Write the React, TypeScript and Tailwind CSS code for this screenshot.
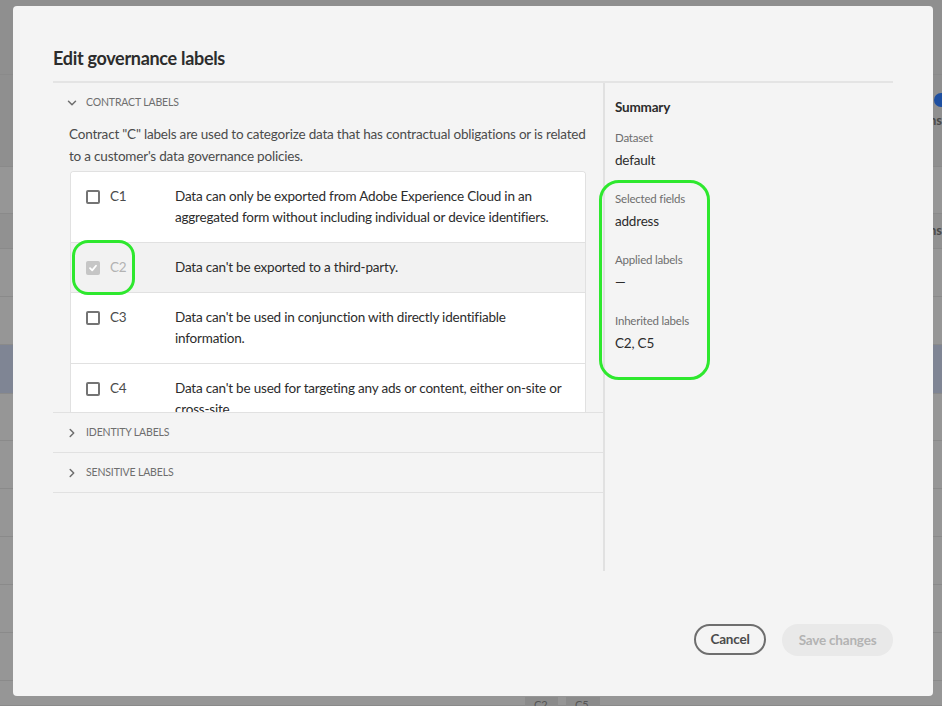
import React from "react";

const rows = [
  { h: 75, bg: "bg-[#8f8f8f]", text: "" },
  { h: 92, bg: "bg-[#8f8f8f]", text: "ns" },
  { h: 47, bg: "bg-[#969696]", text: "" },
  { h: 35, bg: "bg-[#919191]", text: "ns" },
  { h: 48, bg: "bg-[#969696]", text: "" },
  { h: 48, bg: "bg-[#969696]", text: "" },
  { h: 49, bg: "bg-[#7f8594]", text: "" },
  { h: 47, bg: "bg-[#969696]", text: "" },
  { h: 48, bg: "bg-[#969696]", text: "" },
  { h: 48, bg: "bg-[#969696]", text: "" },
  { h: 48, bg: "bg-[#969696]", text: "" },
  { h: 48, bg: "bg-[#969696]", text: "" },
  { h: 48, bg: "bg-[#969696]", text: "" },
  { h: 25, bg: "bg-[#969696]", text: "" },
];

const labels = [
  {
    code: "C1",
    text: "Data can only be exported from Adobe Experience Cloud in an aggregated form without including individual or device identifiers.",
    checked: false,
  },
  { code: "C2", text: "Data can't be exported to a third-party.", checked: true },
  {
    code: "C3",
    text: "Data can't be used in conjunction with directly identifiable information.",
    checked: false,
  },
  {
    code: "C4",
    text: "Data can't be used for targeting any ads or content, either on-site or cross-site.",
    checked: false,
  },
];

function ChevronDown() {
  return (
    <svg width="10" height="10" viewBox="0 0 10 10" className="text-[#6e6e6e]">
      <path d="M1.5 3.2 L5 6.7 L8.5 3.2" fill="none" stroke="currentColor" strokeWidth="1.5" strokeLinecap="round" strokeLinejoin="round" />
    </svg>
  );
}

function ChevronRight() {
  return (
    <svg width="10" height="10" viewBox="0 0 10 10" className="text-[#6e6e6e]">
      <path d="M3.2 1.5 L6.7 5 L3.2 8.5" fill="none" stroke="currentColor" strokeWidth="1.5" strokeLinecap="round" strokeLinejoin="round" />
    </svg>
  );
}

function Checkbox({ checked }: { checked: boolean }) {
  if (checked) {
    return (
      <div className="w-[14px] h-[14px] rounded-[2px] bg-[#c6c6c6] flex items-center justify-center">
        <svg width="10" height="10" viewBox="0 0 10 10">
          <path d="M2 5.2 L4.2 7.4 L8 2.8" fill="none" stroke="#ffffff" strokeWidth="1.8" strokeLinecap="round" strokeLinejoin="round" />
        </svg>
      </div>
    );
  }
  return <div className="w-[14px] h-[14px] rounded-[2px] border-2 border-[#747474] bg-white" />;
}

function Section({ title }: { title: string }) {
  return (
    <div className="h-[40px] border-b border-[#e1e1e1] flex items-center pl-[14px]">
      <ChevronRight />
      <span className="ml-[9px] text-[10.5px] uppercase text-[#6e6e6e] tracking-[-0.15px]">{title}</span>
    </div>
  );
}

function Field({ label, value, first }: { label: string; value: string; first?: boolean }) {
  return (
    <div className={first ? "mt-[13px]" : "mt-[21px]"}>
      <div className="text-[11.5px] leading-[16px] tracking-[-0.2px] text-[#6e6e6e]">{label}</div>
      <div className="mt-[4px] text-[13.5px] leading-[20px] tracking-[-0.2px] text-[#2c2c2c]">{value}</div>
    </div>
  );
}

export default function App() {
  return (
    <div className="relative w-[942px] h-[706px] overflow-hidden font-['Lato',sans-serif]">
      <div className="flex flex-col">
        {rows.map((r, i) => (
          <div
            key={i}
            className={`${r.bg} border-b border-[#8a8a8a] flex items-center justify-end text-[13px] font-bold text-[#4a4a4a]`}
            style={{ height: r.h }}
          >
            {r.text}
          </div>
        ))}
      </div>
      <div className="absolute right-[-6px] top-[93px] w-[14px] h-[14px] rounded-full bg-[#1e4fa0]" />
      <div className="absolute left-[525px] top-[697px] w-[33px] h-[12px] bg-[#8b8b8b] text-[11px] text-[#555] pl-[9px] leading-[16px]">C2</div>
      <div className="absolute left-[566px] top-[697px] w-[34px] h-[12px] bg-[#8b8b8b] text-[11px] text-[#555] pl-[9px] leading-[16px]">C5</div>

      {/* Dialog */}
      <div className="absolute left-[13px] top-[6px] w-[920px] h-[690px] rounded-[4px] bg-[#f4f4f4] px-[40px] pt-[40px] flex flex-col">
        <div className="h-[24px] leading-[24px] text-[18px] tracking-[-0.3px] font-bold text-[#2c2c2c]">Edit governance labels</div>
        <div className="mt-[11px] h-[2px] bg-[#e4e4e4]" />
        <div className="flex h-[488px]">
          {/* Left pane */}
          <div className="w-[550px] flex flex-col">
            <div className="h-[40px] flex items-center pl-[14px]">
              <ChevronDown />
              <span className="ml-[9px] text-[10.5px] uppercase text-[#6e6e6e] tracking-[-0.15px]">Contract labels</span>
            </div>
            <div className="border-b border-[#e1e1e1]">
              <div className="pl-[16px] pr-[16px] text-[13.5px] tracking-[-0.2px] leading-[22px] text-[#4b4b4b]">
                Contract "C" labels are used to categorize data that has contractual obligations or is related to a customer's data governance policies.
              </div>
              <div className="mt-[4px] ml-[17px] w-[516px] h-[241px] overflow-hidden bg-white border-x border-t border-[#e1e1e1] rounded-t-[4px]">
                {labels.map((l) => (
                  <div
                    key={l.code}
                    className={`flex pt-[14px] pb-[14px] border-b border-[#e1e1e1] text-[13.5px] tracking-[-0.2px] leading-[21px] ${l.checked ? "bg-[#f2f2f2]" : "bg-white"}`}
                  >
                    <div className="w-[104px] shrink-0 flex items-start pl-[15px]">
                      <div className="h-[21px] flex items-center">
                        <Checkbox checked={l.checked} />
                      </div>
                      <span className={`ml-[10px] ${l.checked ? "text-[#b3b3b3]" : "text-[#4b4b4b]"}`}>{l.code}</span>
                    </div>
                    <div className="pr-[12px] text-[#2c2c2c]">{l.text}</div>
                  </div>
                ))}
              </div>
            </div>
            <Section title="Identity labels" />
            <Section title="Sensitive labels" />
          </div>
          {/* Divider */}
          <div className="w-[2px] bg-[#e1e1e1]" />
          {/* Right pane */}
          <div className="pl-[10px] pt-[14px]">
            <div className="text-[13.5px] tracking-[-0.2px] leading-[20px] font-bold text-[#2c2c2c]">Summary</div>
            <Field label="Dataset" value="default" first />
            <Field label="Selected fields" value="address" />
            <Field label="Applied labels" value="—" />
            <Field label="Inherited labels" value="C2, C5" />
          </div>
        </div>
        <div className="mt-[53px] flex justify-end gap-[16px]">
          <button className="h-[31px] w-[72px] rounded-full border-2 border-[#6e6e6e] text-[13.5px] tracking-[-0.2px] font-bold text-[#4b4b4b] flex items-center justify-center">
            Cancel
          </button>
          <button className="h-[32px] w-[111px] rounded-full bg-[#e9e9e9] text-[13.5px] tracking-[-0.2px] font-bold text-[#b3b3b3] flex items-center justify-center">
            Save changes
          </button>
        </div>
      </div>

      {/* Highlights */}
      <div className="absolute left-[72px] top-[240px] w-[63px] h-[55px] rounded-[16px] border-[3px] border-[#2ee82e]" />
      <div className="absolute left-[599px] top-[180px] w-[111px] h-[200px] rounded-[20px] border-[3px] border-[#2ee82e]" />
    </div>
  );
}
